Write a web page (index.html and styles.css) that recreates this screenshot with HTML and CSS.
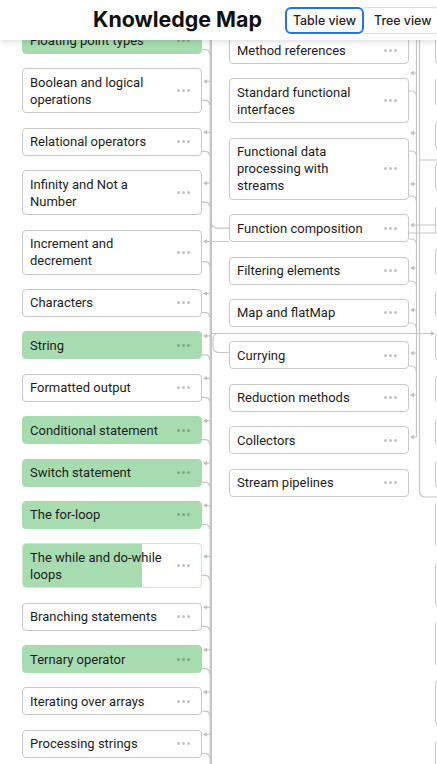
FILE: index.html
```html
<!DOCTYPE html>
<html lang="en">
<head>
<meta charset="utf-8">
<title>Knowledge Map</title>
<link rel="stylesheet" href="styles.css">
</head>
<body>
<header class="topbar">
  <h1 class="title">Knowledge Map</h1>
  <div class="views">
    <button class="view active">Table view</button>
    <button class="view">Tree view</button>
  </div>
</header>
<main class="map">
  <svg class="links" width="437" height="764" viewBox="0 0 437 764">
    <g class="ln">
      <line x1="210.8" y1="40" x2="210.8" y2="764" stroke-width="2.4"/>
      <path d="M210 81.4H206M210 132.3H206M210 183.2H206M229 241.5H206M210 293.5H206M210 335.9H206M210 378.3H206M210 420.7H206M210 463.1H206M210 505.5H206M210 556.4H206M210 607.3H206M210 649.7H206M210 692.1H206M210 734.5H206"/>
      <path d="M202 49.5h3q4.5 0 4.5 4.5M202 100.4h3q4.5 0 4.5 4.5M202 151.3h3q4.5 0 4.5 4.5M202 202.2h3q4.5 0 4.5 4.5M202 261.6h3q4.5 0 4.5 4.5M202 312.5h3q4.5 0 4.5 4.5M202 354.9h3q4.5 0 4.5 4.5M202 397.3h3q4.5 0 4.5 4.5M202 439.7h3q4.5 0 4.5 4.5M202 482.1h3q4.5 0 4.5 4.5M202 524.5h3q4.5 0 4.5 4.5M202 575.4h3q4.5 0 4.5 4.5M202 626.3h3q4.5 0 4.5 4.5M202 668.7h3q4.5 0 4.5 4.5M202 711.1h3q4.5 0 4.5 4.5M202 753.5h3q4.5 0 4.5 4.5"/>
      <path d="M211 221q0 7.2 7 7.2H229M212 333.5H431M219 333.5q-6 0-6 6v7q0 6 6 6H229"/>
      <path d="M416.5 73H413M416.5 133H413M416.5 184H413M437 225H413M416.5 268H413M416.5 310H413M416.5 353H413M416.5 395H413M416.5 437H413"/>
      <path d="M409 91h2q5.5 0 5.5 5.5M409 151h2q5.5 0 5.5 5.5M409 196h2q5.5 0 5.5 5.5M409 239h2q5.5 0 5.5 5.5M409 281h2q5.5 0 5.5 5.5M409 323h2q5.5 0 5.5 5.5M409 366h2q5.5 0 5.5 5.5"/>
      <path d="M416.5 40V437M419.5 40V491q0 6 6 6H437M419.5 160H437M409 233H437"/>
    </g>
    <path class="ah" d="M203 81.4l4-2.3v4.6zM203 132.3l4-2.3v4.6zM203 183.2l4-2.3v4.6zM203 241.5l4-2.3v4.6zM203 293.5l4-2.3v4.6zM203 335.9l4-2.3v4.6zM203 378.3l4-2.3v4.6zM203 420.7l4-2.3v4.6zM203 463.1l4-2.3v4.6zM203 505.5l4-2.3v4.6zM203 556.4l4-2.3v4.6zM203 607.3l4-2.3v4.6zM203 649.7l4-2.3v4.6zM203 692.1l4-2.3v4.6zM203 734.5l4-2.3v4.6zM435 333.5l-4-2.3v4.6zM410 73l4-2.3v4.6zM410 133l4-2.3v4.6zM410 184l4-2.3v4.6zM410 225l4-2.3v4.6zM410 268l4-2.3v4.6zM410 310l4-2.3v4.6zM410 353l4-2.3v4.6zM410 395l4-2.3v4.6zM410 437l4-2.3v4.6z"/>
  </svg>

  <div class="col col-1">
    <div class="node done"><span class="label">Floating point types</span><span class="more"><i></i><i></i><i></i></span></div>
    <div class="node"><span class="label">Boolean and logical operations</span><span class="more"><i></i><i></i><i></i></span></div>
    <div class="node"><span class="label">Relational operators</span><span class="more"><i></i><i></i><i></i></span></div>
    <div class="node"><span class="label">Infinity and Not a Number</span><span class="more"><i></i><i></i><i></i></span></div>
    <div class="node"><span class="label">Increment and decrement</span><span class="more"><i></i><i></i><i></i></span></div>
    <div class="node"><span class="label">Characters</span><span class="more"><i></i><i></i><i></i></span></div>
    <div class="node done"><span class="label">String</span><span class="more"><i></i><i></i><i></i></span></div>
    <div class="node"><span class="label">Formatted output</span><span class="more"><i></i><i></i><i></i></span></div>
    <div class="node done"><span class="label">Conditional statement</span><span class="more"><i></i><i></i><i></i></span></div>
    <div class="node done"><span class="label">Switch statement</span><span class="more"><i></i><i></i><i></i></span></div>
    <div class="node done"><span class="label">The for-loop</span><span class="more"><i></i><i></i><i></i></span></div>
    <div class="node partial" style="--p: 67%"><span class="label">The while and do-while loops</span><span class="more"><i></i><i></i><i></i></span></div>
    <div class="node"><span class="label">Branching statements</span><span class="more"><i></i><i></i><i></i></span></div>
    <div class="node done"><span class="label">Ternary operator</span><span class="more"><i></i><i></i><i></i></span></div>
    <div class="node"><span class="label">Iterating over arrays</span><span class="more"><i></i><i></i><i></i></span></div>
    <div class="node"><span class="label">Processing strings</span><span class="more"><i></i><i></i><i></i></span></div>
  </div>

  <div class="col col-2">
    <div class="node"><span class="label">Method references</span><span class="more"><i></i><i></i><i></i></span></div>
    <div class="node"><span class="label">Standard functional interfaces</span><span class="more"><i></i><i></i><i></i></span></div>
    <div class="node"><span class="label">Functional data processing with streams</span><span class="more"><i></i><i></i><i></i></span></div>
    <div class="node"><span class="label">Function composition</span><span class="more"><i></i><i></i><i></i></span></div>
    <div class="node"><span class="label">Filtering elements</span><span class="more"><i></i><i></i><i></i></span></div>
    <div class="node"><span class="label">Map and flatMap</span><span class="more"><i></i><i></i><i></i></span></div>
    <div class="node"><span class="label">Currying</span><span class="more"><i></i><i></i><i></i></span></div>
    <div class="node"><span class="label">Reduction methods</span><span class="more"><i></i><i></i><i></i></span></div>
    <div class="node"><span class="label">Collectors</span><span class="more"><i></i><i></i><i></i></span></div>
    <div class="node"><span class="label">Stream pipelines</span><span class="more"><i></i><i></i><i></i></span></div>
  </div>

  <div class="col col-3">
    <div class="node"></div>
    <div class="node"></div>
    <div class="node"></div>
    <div class="node"></div>
    <div class="node"></div>
    <div class="node"></div>
    <div class="node"></div>
    <div class="node"></div>
    <div class="node"></div>
    <div class="node"></div>
    <div class="node"></div>
    <div class="node tall"></div>
    <div class="node tall"></div>
    <div class="node tall"></div>
    <div class="node tall"></div>
    <div class="node tall"></div>
  </div>
</main>
</body>
</html>
```

FILE: styles.css
```css
html, body {
  margin: 0;
  padding: 0;
  background: #fff;
  overflow: hidden;
}

body {
  width: 437px;
  height: 764px;
  font-family: Roboto, "Liberation Sans", sans-serif;
  color: #1d1d1d;
}

.topbar {
  position: absolute;
  top: 0;
  left: 0;
  width: 437px;
  height: 40px;
  box-sizing: border-box;
  padding-left: 93px;
  display: flex;
  align-items: center;
  gap: 23px;
  background: #fff;
  box-shadow: 0 2px 6px rgba(0, 0, 0, 0.13);
  z-index: 5;
  overflow: hidden;
}

.title {
  margin: 0;
  font-family: Inter, Roboto, sans-serif;
  font-weight: 700;
  font-size: 21.4px;
  line-height: 1;
  color: #111;
  white-space: nowrap;
}

.views {
  display: flex;
  flex-shrink: 0;
}

.view {
  height: 27px;
  box-sizing: border-box;
  margin: 0;
  padding: 0 8px 0 10px;
  font-family: Inter, Roboto, sans-serif;
  font-weight: 500;
  font-size: 12.4px;
  color: #222;
  background: #fff;
  border: 1px solid #dcdcdc;
  border-left: 0;
  border-radius: 0 6px 6px 0;
  white-space: nowrap;
}

.view.active {
  padding: 0 6px;
  border: 2px solid #2872e4;
  border-radius: 6px;
}

.map {
  position: relative;
  display: flex;
  align-items: flex-start;
  width: 437px;
  height: 764px;
}

.links {
  position: absolute;
  left: 0;
  top: 0;
}

.ln {
  fill: none;
  stroke: #c6c6c6;
  stroke-width: 1.2;
}

.ah {
  fill: #bdbdbd;
}

.col {
  position: relative;
  display: flex;
  flex-direction: column;
  gap: 14.4px;
  width: 180px;
  flex-shrink: 0;
}

.col-1 {
  margin-left: 22px;
  padding-top: 26px;
}

.col-2 {
  margin-left: 27px;
  padding-top: 36px;
}

.col-3 {
  margin-left: 26px;
  padding-top: 36px;
}

.node {
  display: flex;
  align-items: center;
  box-sizing: border-box;
  width: 180px;
  min-height: 28px;
  padding: 4.5px 11px 4.5px 7px;
  border: 1px solid #c8c8c8;
  border-radius: 4px;
  background: #fff;
  font-size: 13px;
  line-height: 17px;
}

.node.tall {
  min-height: 45px;
}

.node.done {
  background: #a6dcb0;
  border-color: #a6dcb0;
}

.node.partial {
  background: linear-gradient(90deg, #a6dcb0 var(--p), #fff var(--p));
  border-color: #cde9d2;
}

.label {
  flex: 1;
  min-width: 0;
}

.more {
  display: flex;
  gap: 2px;
  margin-left: 11px;
  flex-shrink: 0;
}

.more i {
  width: 3px;
  height: 3px;
  border-radius: 50%;
  background: rgba(0, 0, 0, 0.24);
}
```
